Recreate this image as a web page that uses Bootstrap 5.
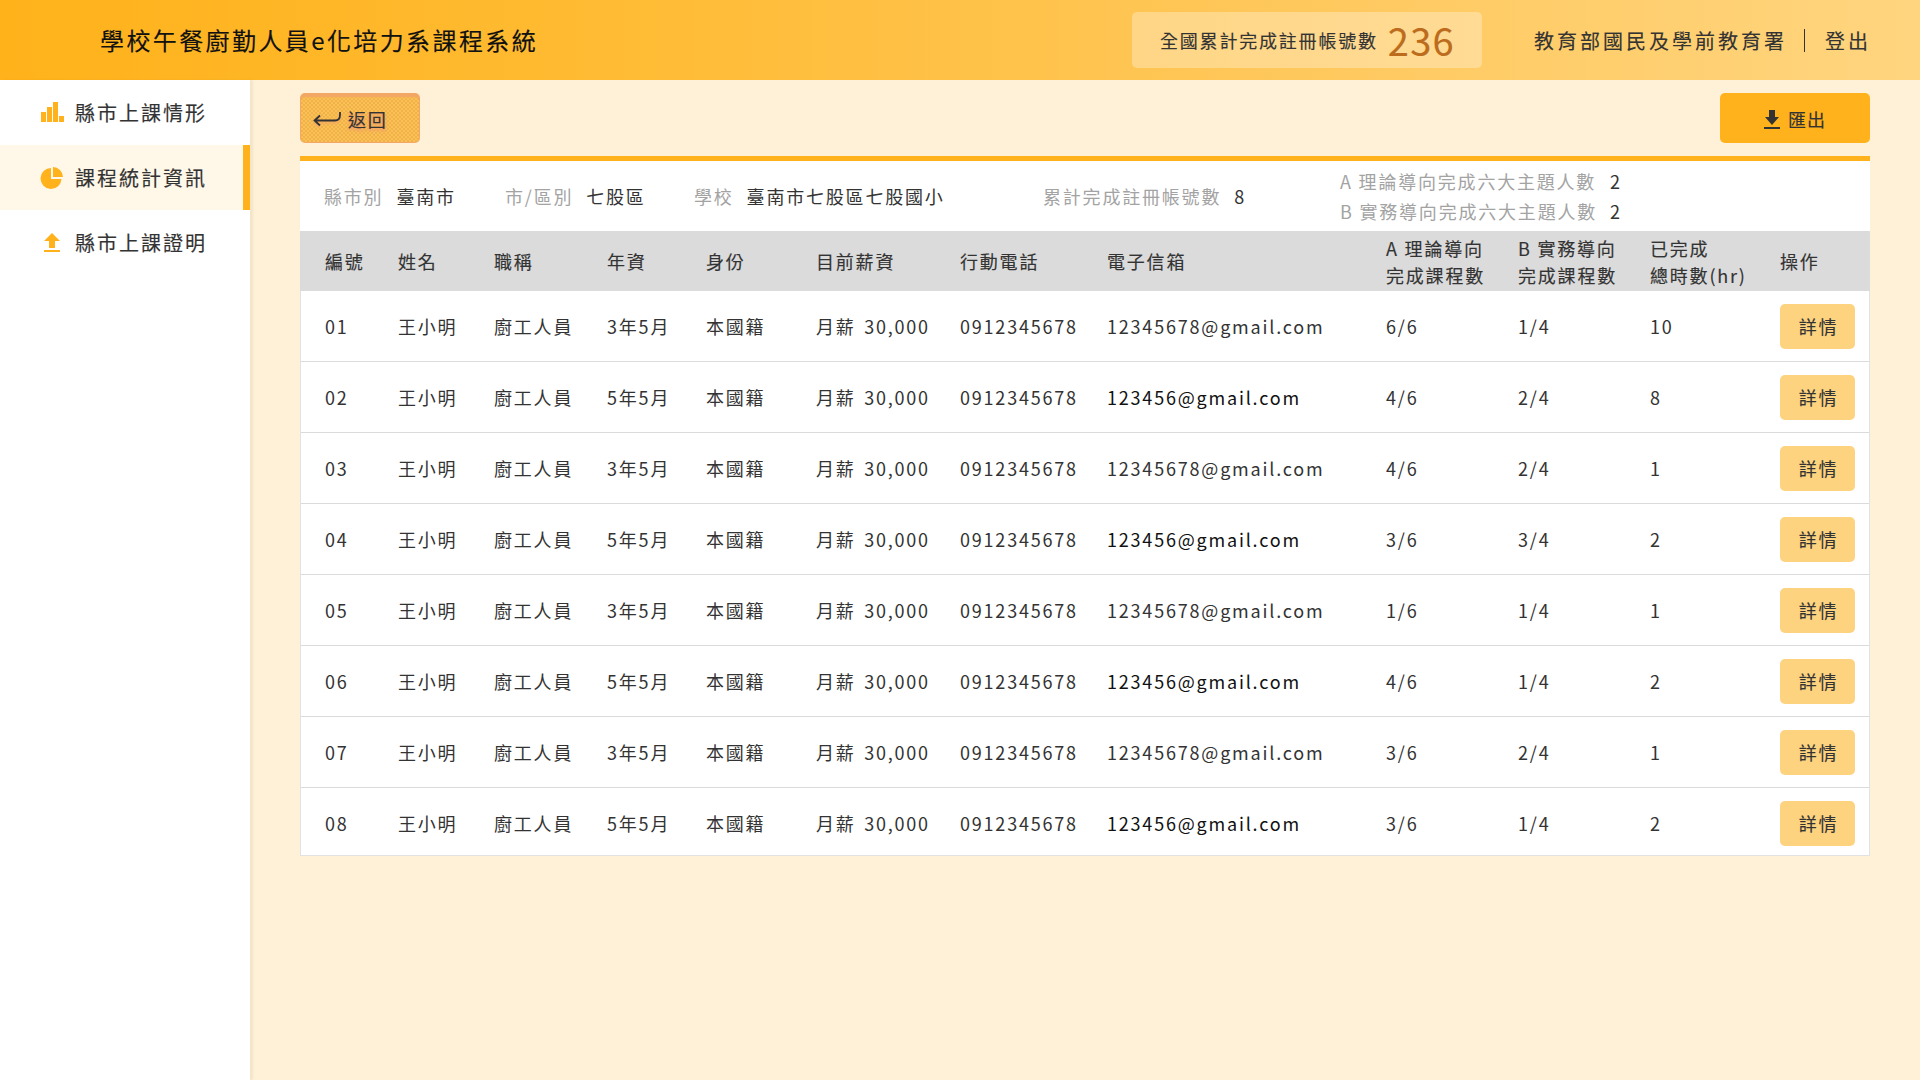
<!DOCTYPE html>
<html lang="zh-Hant">
<head>
<meta charset="utf-8">
<title>學校午餐廚勤人員e化培力系課程系統</title>
<link href="https://cdn.jsdelivr.net/npm/bootstrap@5.3.0/dist/css/bootstrap.min.css" rel="stylesheet">
<style>
body{font-family:"Noto Sans CJK TC",sans-serif;font-size:18px;letter-spacing:1.8px;line-height:27px;color:#333;background:#fef1d8;min-height:1080px}
.topbar{height:80px;background:linear-gradient(90deg,#ffb21a 0%,#ffbc36 35%,#ffc95f 70%,#ffd57f 100%);padding:0 49px 0 100px}
.site-title{font-size:24px;letter-spacing:2.4px;color:#111;padding-bottom:2px;-webkit-text-stroke:.15px #111}
.count-box{width:350px;height:56px;border-radius:5px;background:rgba(255,255,255,.3);padding-left:28px;margin-right:52px;-webkit-text-stroke:.15px}
.count-num{font-size:38px;letter-spacing:1.3px;color:#bc6c1c;margin-left:10px;padding-bottom:2px}
.user-area{font-size:20px;letter-spacing:3px;-webkit-text-stroke:.15px #333}
.user-sep{width:1px;height:23px;background:#333;margin:0 20px 0 17px}
.side{width:250px;height:1000px;background:#fff;box-shadow:3px 0 2px rgba(120,90,0,.08)}
.side .nav-link{height:65px;padding:0 0 0 40px;font-size:20px;letter-spacing:2px;color:#333;border-right:7px solid transparent;-webkit-text-stroke:.15px #333}
.side .nav-link.active{background:#fff7e8;border-color:#ffb21c}
.side svg{width:24px;margin-right:11px;fill:#ffb21c;-webkit-text-stroke:0}
.content{padding:13px 50px 0}
.btn{--bs-btn-border-width:0;--bs-btn-border-radius:5px;font-size:18px;letter-spacing:1.8px;color:#333;padding:0;-webkit-text-stroke:.15px #333}
.btn-back{width:120px;height:50px;padding:3px 0 0 13px;background:radial-gradient(circle,#d9a352 .6px,transparent .8px) 0 0/4px 4px,radial-gradient(circle,#d9a352 .6px,transparent .8px) 2px 2px/4px 4px,#fec04e;box-shadow:inset 0 4px 1px #f3a765,inset 0 0 1px 1px #f3a765}
.btn-back span{text-shadow:1px 2px 2px #f3a765,-1px 1px 2px #f3a765,0 3px 3px #f3a765}
.btn-back svg{margin-right:7px;filter:drop-shadow(0 2px 1px #f3a765)}
.btn-export{width:150px;height:50px;padding-top:3px;background:#ffb21c;letter-spacing:.9px}
.panel{margin-top:13px;border-top:5px solid #ffb21c;background:#fff}
.info{height:70px;padding-left:24px;white-space:nowrap}
.info .lbl{color:#a3a3a3;margin-right:13px}
.info-pair{line-height:30px}
.info-pair .lbl{display:inline-block;width:257px}
.people{table-layout:fixed;width:1570px;border:1px solid #e2e2e2;border-top:0;border-collapse:separate;border-spacing:0}
.people th,.people td{padding:0;white-space:nowrap;vertical-align:middle}
.people tr>:first-child{padding-left:24px}
.people thead th{height:60px;padding-top:1px;background:#dbdbdb;font-weight:400;-webkit-text-stroke:.15px #333}
.people thead{box-shadow:-1px 0 #dbdbdb,1px 0 #dbdbdb}
.people td{height:71px;border-bottom:1px solid #dbdbdb}
.people tr:last-child td{height:67px;border:0;padding-top:3px}
.people .salary{word-spacing:2.7px}
.btn-detail{width:75px;height:45px;background:#fed380;padding-left:2px}
.mail-visited{color:#111}
</style>
<script src="https://cdn.jsdelivr.net/npm/bootstrap@5.3.0/dist/js/bootstrap.bundle.min.js"></script>
</head>
<body>
<header class="topbar d-flex align-items-center">
  <div class="site-title me-auto">學校午餐廚勤人員e化培力系課程系統</div>
  <div class="count-box d-flex align-items-center"><span>全國累計完成註冊帳號數</span><span class="count-num">236</span></div>
  <div class="user-area d-flex align-items-center"><span>教育部國民及學前教育署</span><span class="user-sep"></span><span>登出</span></div>
</header>
<div class="d-flex">
  <nav class="side nav flex-column flex-nowrap flex-shrink-0">
    <a class="nav-link d-flex align-items-center" href="#"><svg viewBox="0 0 24 24" height="24"><path d="M1 11h5v10H1zM7 6h5v15H7zM13 1h5v20h-5zM19 15h5v6h-5z"/></svg>縣市上課情形</a>
    <a class="nav-link active d-flex align-items-center" href="#"><svg viewBox="0 0 24 24" height="24"><path d="M11 2v11h10.500A10.500 10.500 0 1 1 11 2z"/><path d="M13 1a10.500 10.500 0 0 1 10 10H13z"/></svg>課程統計資訊</a>
    <a class="nav-link d-flex align-items-center" href="#"><svg viewBox="0 0 24 24" height="24"><path d="M12 2l8 8h-5v7H9v-7H4zM4 19h16v2H4z"/></svg>縣市上課證明</a>
  </nav>
  <main class="content flex-grow-1">
    <div class="d-flex justify-content-between">
      <button class="btn btn-back d-flex align-items-center"><svg width="28" height="16" viewBox="0 0 28 16" fill="none" stroke="#333" stroke-width="1.800"><path d="M7 3.500L1.500 8.500L7 13.500M1.500 8.500H22Q27 8.500 27 3V0"/></svg><span>返回</span></button>
      <button class="btn btn-export d-flex align-items-center justify-content-center"><svg width="16" height="20" viewBox="0 0 16 20" fill="#333" class="me-2"><path d="M5 0h6v7h4l-7 8-7-8h4zM0 17h16v2H0z"/></svg>匯出</button>
    </div>
    <section class="panel">
      <div class="info d-flex align-items-center">
        <div style="width:181px"><span class="lbl">縣市別</span>臺南市</div>
        <div style="width:189px"><span class="lbl">市/區別</span>七股區</div>
        <div style="width:349px"><span class="lbl">學校</span>臺南市七股區七股國小</div>
        <div style="width:297px"><span class="lbl">累計完成註冊帳號數</span>8</div>
        <div class="info-pair"><div><span class="lbl">A 理論導向完成六大主題人數</span>2</div><div><span class="lbl">B 實務導向完成六大主題人數</span>2</div></div>
      </div>
      <table class="people">
        <colgroup><col style="width:97px"><col style="width:96px"><col style="width:113px"><col style="width:99px"><col style="width:110px"><col style="width:144px"><col style="width:147px"><col style="width:279px"><col style="width:132px"><col style="width:132px"><col style="width:130px"><col></colgroup>
        <thead><tr><th>編號</th><th>姓名</th><th>職稱</th><th>年資</th><th>身份</th><th>目前薪資</th><th>行動電話</th><th>電子信箱</th><th>A 理論導向<br>完成課程數</th><th>B 實務導向<br>完成課程數</th><th>已完成<br>總時數(hr)</th><th>操作</th></tr></thead>
        <tbody id="rows"></tbody>
      </table>
    </section>
  </main>
</div>
<script>
document.getElementById('rows').innerHTML=[['6/6','1/4',10],['4/6','2/4',8],['4/6','2/4',1],['3/6','3/4',2],['1/6','1/4',1],['4/6','1/4',2],['3/6','2/4',1],['3/6','1/4',2]].map((r,i)=>`<tr><td>0${i+1}</td><td>王小明</td><td>廚工人員</td><td>${i%2?5:3}年5月</td><td>本國籍</td><td class="salary">月薪 30,000</td><td>0912345678</td><td class="${i%2?'mail-visited':''}">${i%2?'123456':'12345678'}@gmail.com</td><td>${r[0]}</td><td>${r[1]}</td><td>${r[2]}</td><td><button class="btn btn-detail">詳情</button></td></tr>`).join('');
</script>
</body>
</html>
